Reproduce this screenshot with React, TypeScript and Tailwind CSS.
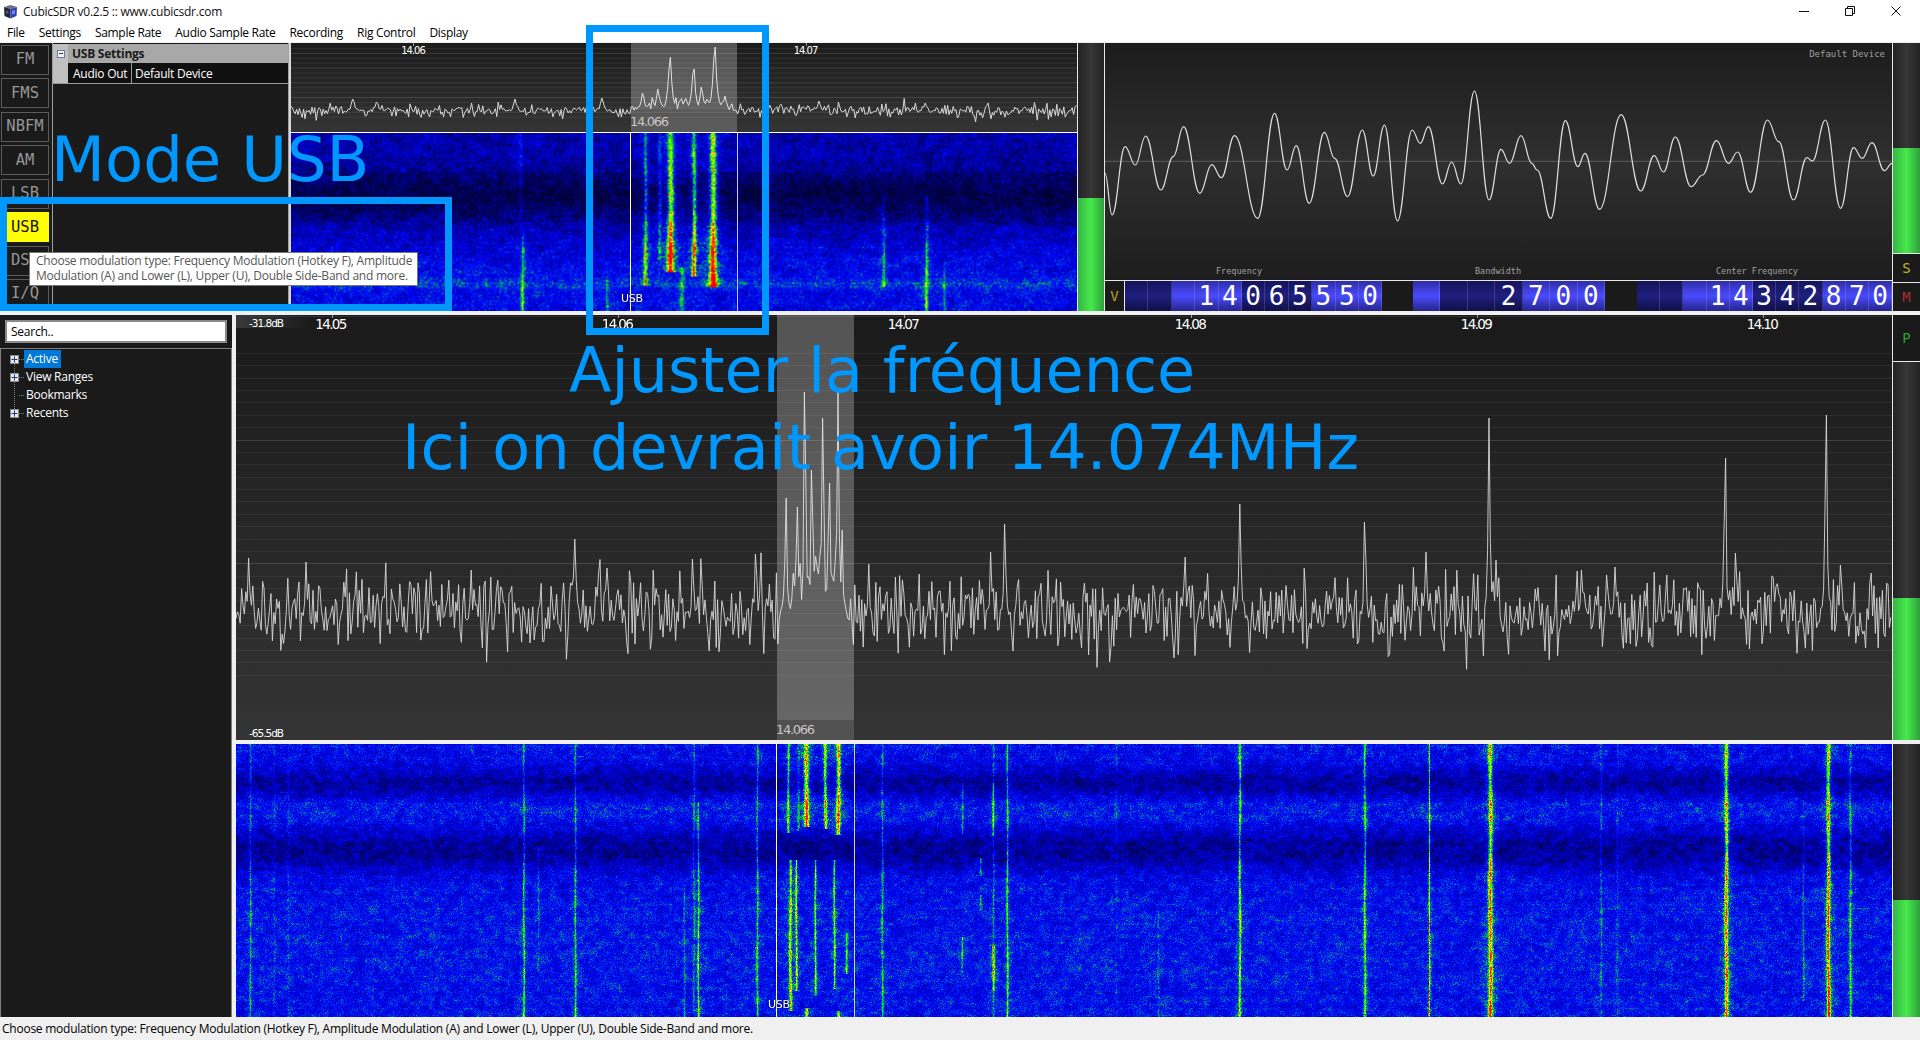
import React, { useLayoutEffect, useRef } from "react";

const rng = (seed: number) => () => {
  seed |= 0;
  seed = (seed + 0x6d2b79f5) | 0;
  let t = Math.imul(seed ^ (seed >>> 15), 1 | seed);
  t = (t + Math.imul(t ^ (t >>> 7), 61 | t)) ^ t;
  return ((t ^ (t >>> 14)) >>> 0) / 4294967296;
};
const bump = (y: number, c: number, h: number) => Math.exp(-(((y - c) / h) ** 2));

const stops: [number, number, number, number][] = [
  [0, 0, 0, 0],
  [0.22, 0, 0, 70],
  [0.36, 0, 0, 190],
  [0.45, 0, 5, 250],
  [0.51, 0, 50, 235],
  [0.57, 0, 135, 130],
  [0.63, 0, 205, 50],
  [0.72, 40, 255, 0],
  [0.82, 255, 255, 0],
  [0.93, 255, 50, 0],
  [1, 255, 0, 0],
];
const color = (v: number) => {
  const c = Math.min(1, Math.max(0, v));
  for (let i = 1; i < stops.length; i++) {
    if (c <= stops[i][0]) {
      const a = stops[i - 1];
      const b = stops[i];
      const t = (c - a[0]) / (b[0] - a[0]);
      return [a[1] + (b[1] - a[1]) * t, a[2] + (b[2] - a[2]) * t, a[3] + (b[3] - a[3]) * t];
    }
  }
  return [255, 0, 0];
};

type Sig = [number, number, number, number, number, number];

function Waterfall(props: {
  width: number;
  height: number;
  scale: number;
  ox: number;
  oy: number;
  lines: Sig[];
  level: (y: number) => number;
  noise: number;
  low: number;
  seed: number;
}) {
  const { width, height, scale, ox, oy, lines, level, noise, low: lowAmp, seed } = props;
  const ref = useRef<HTMLCanvasElement>(null);
  const w = Math.round(width / scale);
  const h = Math.round(height / scale);
  useLayoutEffect(() => {
    const ctx = ref.current!.getContext("2d")!;
    const img = ctx.createImageData(w, h);
    const r = rng(seed);
    const gw = Math.ceil(w / 5) + 2;
    const gh = Math.ceil(h / 4) + 2;
    const coarse = new Float32Array(gw * gh).map(() => r() - 0.5);
    const rowJit = new Float32Array(h).map(() => r() - 0.5);
    const rowMod = new Float32Array(h);
    let m = 1;
    for (let y = 0; y < h; y++) {
      m += (1 - m) * 0.12 + (r() - 0.5) * 0.16;
      rowMod[y] = m;
    }
    const phases = lines.map(() => r() * 6.28);
    for (let y = 0; y < h; y++) {
      const py = y * scale;
      const ay = oy + py;
      const base = level(py);
      for (let x = 0; x < w; x++) {
        const ax = ox + x * scale;
        const gx = x / 5;
        const gy = y / 4;
        const ix = Math.floor(gx);
        const iy = Math.floor(gy);
        const fx = gx - ix;
        const fy = gy - iy;
        const c00 = coarse[iy * gw + ix];
        const c10 = coarse[iy * gw + ix + 1];
        const c01 = coarse[(iy + 1) * gw + ix];
        const c11 = coarse[(iy + 1) * gw + ix + 1];
        const low = c00 * (1 - fx) * (1 - fy) + c10 * fx * (1 - fy) + c01 * (1 - fx) * fy + c11 * fx * fy;
        let v = base + (r() + r() - 1) * noise + low * lowAmp + rowJit[y] * 0.025;
        for (let i = 0; i < lines.length; i++) {
          const l = lines[i];
          if (ay < l[4] || ay > l[5]) continue;
          const wob = Math.sin(ay * 0.045 + phases[i]) * 0.3;
          const d = ax - l[0] - wob;
          const ad = Math.abs(d);
          if (ad > l[1] * 8 + 3) continue;
          const t = (ay - l[4]) / Math.max(1, l[5] - l[4]);
          const a = (l[2] + (l[3] - l[2]) * t) * rowMod[y];
          v += a * Math.exp(-((d / l[1]) ** 2)) + a * 0.4 * r() * Math.exp(-((d / (l[1] * 3 + 1)) ** 2));
        }
        const col = color(v);
        const o = (y * w + x) * 4;
        img.data[o] = col[0];
        img.data[o + 1] = col[1];
        img.data[o + 2] = col[2];
        img.data[o + 3] = 255;
      }
    }
    ctx.putImageData(img, 0, 0);
  }, []);
  return <canvas ref={ref} width={w} height={h} className="block h-full w-full" />;
}

const topLines: Sig[] = [
  [645, 1.7, 0.2, 0.34, 133, 285],
  [670, 3.2, 0.33, 0.54, 133, 272],
  [693.5, 2, 0.3, 0.46, 133, 276],
  [712.6, 3.2, 0.36, 0.54, 133, 287],
  [520, 1.4, 0.1, 0.08, 133, 230],
  [522, 1.5, 0.12, 0.26, 230, 311],
  [659, 1.6, 0.12, 0.18, 133, 260],
  [883, 1.4, 0.1, 0.2, 196, 286],
  [926, 1.5, 0.14, 0.28, 196, 311],
  [944, 1.2, 0.1, 0.16, 262, 311],
  [606, 1.2, 0.1, 0.18, 280, 311],
  [681, 1.8, 0.12, 0.18, 268, 311],
];

const mainLines: Sig[] = [
  [250, 0.9, 0.09, 0.15, 744, 1017],
  [274, 0.9, 0.05, 0.05, 744, 1017],
  [288, 0.9, 0.045, 0.045, 744, 1017],
  [523.5, 1, 0.14, 0.22, 744, 1017],
  [538, 0.9, 0.08, 0.09, 846, 970],
  [575, 1, 0.13, 0.2, 744, 1017],
  [684, 0.9, 0.08, 0.12, 884, 1017],
  [693.5, 1, 0.11, 0.1, 744, 1010],
  [698, 0.9, 0.17, 0.25, 802, 1017],
  [757, 1, 0.15, 0.19, 744, 1017],
  [788, 1.2, 0.23, 0.28, 744, 832],
  [806, 2.2, 0.36, 0.44, 744, 826],
  [825, 1.5, 0.32, 0.34, 744, 828],
  [838, 2, 0.36, 0.42, 744, 834],
  [798, 1.2, 0.07, 0.14, 744, 830],
  [790, 1.3, 0.26, 0.36, 860, 1010],
  [796, 0.9, 0.28, 0.3, 860, 990],
  [815, 0.9, 0.24, 0.26, 860, 995],
  [834, 0.9, 0.26, 0.28, 860, 988],
  [846, 0.9, 0.24, 0.22, 933, 973],
  [806, 1.4, 0.3, 0.3, 1008, 1017],
  [838, 1.4, 0.26, 0.26, 1011, 1017],
  [882, 1, 0.11, 0.18, 744, 1017],
  [962, 0.9, 0.16, 0.14, 783, 833],
  [962, 0.9, 0.22, 0.14, 937, 972],
  [980, 1.1, 0.17, 0.12, 858, 875],
  [980, 0.9, 0.17, 0.12, 895, 910],
  [993, 1, 0.11, 0.11, 744, 1017],
  [993, 1.1, 0.15, 0.13, 783, 835],
  [993, 1.1, 0.25, 0.22, 945, 990],
  [1007, 1, 0.19, 0.23, 744, 1017],
  [1116, 0.9, 0.05, 0.05, 744, 1017],
  [1158, 0.8, 0.06, 0.08, 900, 1017],
  [1239.5, 1.1, 0.25, 0.28, 744, 1017],
  [1364.5, 1.1, 0.22, 0.24, 744, 1017],
  [1429, 0.6, 0.28, 0.36, 744, 1017],
  [1490, 2, 0.34, 0.41, 744, 1017],
  [1600.7, 1, 0.08, 0.09, 744, 1017],
  [1617, 0.9, 0.06, 0.06, 744, 1017],
  [1726, 1.8, 0.33, 0.4, 744, 1017],
  [1828, 1.8, 0.33, 0.44, 744, 1017],
  [1850, 1.2, 0.12, 0.22, 744, 1017],
  [1803, 1, 0.06, 0.12, 800, 1000],
];

const mainLevel = (y: number) =>
  0.445 - 0.125 * bump(y, 38, 15) - 0.135 * bump(y, 105, 22) + 0.03 * bump(y, 68, 14) + 0.012 * bump(y, 210, 40);
const topLevel = (y: number) =>
  0.345 - 0.13 * bump(y, 62, 24) + 0.085 * Math.min(1, Math.max(0, (y - 85) / 50)) + 0.07 * bump(y, 151, 6);

type Peak = [number, number];
const mainPeaks: Peak[] = [
  [13, 558], [70, 562], [235, 570], [338.4, 539], [370.5, 568], [457, 559], [520, 554],
  [550, 498], [561, 507], [569, 392], [576, 470], [587, 418], [593, 483], [602, 392], [606, 530],
  [755, 552], [769, 524], [949, 557], [1004, 504], [1129, 522], [1190, 552], [1253, 418], [1260, 560],
  [1346, 570], [1379, 567], [1489, 458], [1590, 415], [1500, 553], [1605, 565],
];
const topPeaks: Peak[] = [
  [62, 99], [86, 102], [224, 99], [311, 98], [352, 93], [367, 89], [379, 57], [402.5, 69], [410.6, 87],
  [423.7, 47], [434, 96], [528, 101], [634, 103],
];

function trace(width: number, step: number, center: number, amp: number, peaks: Peak[], seed: number, lift: (x: number) => number, pw: number) {
  const r = rng(seed);
  const out: string[] = [];
  for (let x = 0; x <= width; x += step) {
    const n = (r() + r() + r() - 1.5) * amp * 1.5;
    let y = center + n - lift(x);
    if (r() < 0.07) y += (r() < 0.6 ? 1 : -1) * amp * 0.9;
    for (const p of peaks) {
      const d = Math.abs(x - p[0]);
      if (d < step / 2) {
        y = p[1];
      } else if (d < pw * 5) {
        const k = 1 / (1 + (d / pw) ** 2);
        const py = p[1] + (center - p[1]) * (1 - k);
        y = Math.min(y, py + (r() * amp) / 2);
      }
    }
    out.push(`${x.toFixed(1)},${y.toFixed(1)}`);
  }
  return out.join(" ");
}

const mainTrace = trace(1656, 1.4, 613, 25, mainPeaks, 11, (x) => 34 * Math.exp(-(((x - 577) / 26) ** 4)) + 8 * bump(x, 1253, 14), 1.1);
const topTrace = trace(786, 1.4, 111, 4.5, topPeaks, 23, (x) => 9 * Math.exp(-(((x - 395) / 42) ** 4)), 2);

const scopePts: [number, number][] = [
  [64, 520], [77, 645], [101, 440], [120, 495], [139, 408], [167, 570], [190, 470], [209, 380], [239, 580], [261, 494],
  [279, 533], [303, 407], [346, 655], [377, 340], [400, 510], [417, 437], [441, 610], [469, 397], [488, 475], [512, 590],
  [539, 390], [559, 528], [580, 375], [604, 663], [631, 390], [646, 430], [661, 380], [687, 552], [704, 486], [721, 552],
  [746, 273], [773, 600], [795, 448], [811, 490], [832, 407], [852, 490], [862, 510], [887, 655], [914, 362], [937, 500],
  [950, 460], [977, 628], [1017, 344], [1053, 573], [1078, 467], [1095, 516], [1117, 411], [1146, 560], [1167, 525], [1193, 422],
  [1215, 490], [1232, 456], [1256, 577], [1287, 360], [1308, 425], [1335, 600], [1360, 473], [1370, 483], [1394, 360], [1422, 625],
  [1446, 443], [1462, 475], [1480, 428], [1503, 512], [1517, 490],
];
const scopePath = scopePts
  .map((p, i) => {
    if (i === 0) return `M${p[0]} ${p[1]}`;
    const a = scopePts[i - 1];
    const dx = (p[0] - a[0]) * 0.42;
    return `C${a[0] + dx} ${a[1]} ${p[0] - dx} ${p[1]} ${p[0]} ${p[1]}`;
  })
  .join(" ");

const uiFont = "font-['Open_Sans',sans-serif]";
const glFont = "font-['DejaVu_Sans',sans-serif]";
const monoFont = "font-['DejaVu_Sans_Mono',monospace]";

function CubeIcon() {
  return (
    <svg width="15" height="15" viewBox="0 0 15 15">
      <path d="M1 3 L7.5 1 L14 3 L7.5 5 Z" fill="#6b6f80" />
      <path d="M1 3 L7.5 5 L7.5 14.5 L1.5 12 Z" fill="#23243a" />
      <path d="M14 3 L7.5 5 L7.5 14.5 L13.5 12 Z" fill="#2b3fb8" />
      <path d="M9 7 L12 6 L12 9.5 L9 10.5 Z" fill="#7b8cf0" />
      <path d="M3 6.5 L5.5 7.3 L5.5 10 L3 9.2 Z" fill="#55586e" />
    </svg>
  );
}

function TitleBar() {
  return (
    <div className="flex h-[22px] shrink-0 items-center justify-between bg-white">
      <div className={`flex items-center gap-[5px] pl-[3px] text-[12px] tracking-[-0.25px] text-[#111] ${uiFont}`}>
        <CubeIcon />
        <span className="pt-[1px]">CubicSDR v0.2.5 :: www.cubicsdr.com</span>
      </div>
      <div className="flex pr-[1px]">
        <div className="flex h-[21px] w-[46px] items-center justify-center">
          <svg width="10" height="10" viewBox="0 0 10 10"><path d="M0 5.5H10" stroke="#111" /></svg>
        </div>
        <div className="flex h-[21px] w-[46px] items-center justify-center">
          <svg width="10" height="10" viewBox="0 0 10 10" fill="none" stroke="#111"><path d="M.5 2.5H7.5V9.5H.5Z" /><path d="M2.5 2.5V.5H9.5V7.5H7.5" /></svg>
        </div>
        <div className="flex h-[21px] w-[46px] items-center justify-center">
          <svg width="10" height="10" viewBox="0 0 10 10" stroke="#111"><path d="M.5.5L9.5 9.5M9.5.5L.5 9.5" /></svg>
        </div>
      </div>
    </div>
  );
}

function MenuBar() {
  const items = ["File", "Settings", "Sample Rate", "Audio Sample Rate", "Recording", "Rig Control", "Display"];
  return (
    <div className={`flex h-[21px] shrink-0 items-center gap-[14px] border-b border-[#f0f0f0] bg-white pl-[7px] pt-[1px] text-[12px] tracking-[-0.3px] text-black ${uiFont}`}>
      {items.map((m) => (
        <span key={m}>{m}</span>
      ))}
    </div>
  );
}

function ModeColumn() {
  const modes = ["FM", "FMS", "NBFM", "AM", "LSB", "USB", "DSB", "I/Q"];
  return (
    <div className="flex w-[52px] shrink-0 flex-col gap-[3.5px] bg-[#1a1a1a] py-[2px] pl-[1px] pr-[3px]">
      {modes.map((m) => (
        <div
          key={m}
          className={`flex flex-1 items-center justify-center border text-[15.5px] ${monoFont} ${
            m === "USB" ? "border-[#ffff00] bg-[#ffff00] text-[#111]" : "border-[#5c5c5c] bg-[#1a1a1a] text-[#969696]"
          }`}
        >
          {m}
        </div>
      ))}
    </div>
  );
}

function SettingsPanel() {
  return (
    <div className={`flex w-[237px] shrink-0 flex-col border-x border-[#a0a0a0] bg-[#1a1a1a] text-[12px] tracking-[-0.25px] ${uiFont}`}>
      <div className="flex h-[41px] flex-col border-b border-[#9a9a9a] pt-[1px]">
        <div className="flex h-[20px] items-center bg-[#a8a8a8]">
          <div className="flex w-[15px] items-center justify-center self-stretch bg-[#c0c0c0]">
            <div className="flex h-[8px] w-[8px] items-center justify-center border border-[#6f7a96] bg-[#f4f4f4]">
              <div className="h-[1px] w-[4px] bg-[#27357a]" />
            </div>
          </div>
          <span className="pl-[4px] pt-[1px] font-bold text-[#1a1a1a]">USB Settings</span>
        </div>
        <div className="flex h-[20px] items-center bg-[#101010] text-white">
          <div className="w-[15px] self-stretch bg-[#c0c0c0]" />
          <div className="flex h-full w-[64px] items-center border-r border-[#9a9a9a] pl-[5px] pt-[2px]">Audio Out</div>
          <div className="pl-[3px] pt-[2px]">Default Device</div>
        </div>
      </div>
    </div>
  );
}

function Meter({ green }: { green: string }) {
  return (
    <div className="flex min-h-0 flex-1 flex-col">
      <div className="min-h-0 flex-1 bg-linear-to-r from-[#232323] via-[#363636] to-[#232323]" />
      <div className={`shrink-0 bg-linear-to-r from-[#35b545] via-[#47ea4b] to-[#2f9f3c] ${green}`} />
    </div>
  );
}

function TopSpectrum() {
  const ticks: [string, number][] = [["14.06", 122], ["14.07", 514.5]];
  return (
    <div className="relative h-[89px] shrink-0 overflow-hidden bg-linear-to-b from-[#1c1c1c] to-[#343434]">
      <svg width="786" height="89" viewBox="0 43 786 89" className="block">
        {Array.from({ length: 15 }, (_, i) => (
          <line key={i} x1="0" x2="786" y1={48.5 + i * 4.9} y2={48.5 + i * 4.9} stroke="#fff" strokeOpacity={i % 3 === 1 ? 0.13 : 0.07} />
        ))}
        <polyline points={topTrace} fill="none" stroke="#d8d8d8" strokeWidth="1" />
      </svg>
      <div className="absolute bottom-[22px] left-[340px] top-0 w-[106px] bg-white/25" />
      <div className="absolute bottom-0 left-[340px] h-[22px] w-[106px] bg-white/20" />
      {ticks.map(([t, x]) => (
        <React.Fragment key={t}>
          <div className="absolute top-0 h-[3px] w-[1px] bg-[#999]" style={{ left: x }} />
          <div className={`absolute top-[3px] -translate-x-1/2 text-[10px] leading-[10px] tracking-[-1px] text-white ${glFont}`} style={{ left: x }}>
            {t}
          </div>
        </React.Fragment>
      ))}
      <div className={`absolute left-[339px] top-[71px] text-[13px] leading-[16px] tracking-[-1.3px] text-[#c8c8c8] ${glFont}`}>14.066</div>
    </div>
  );
}

function MainSpectrum() {
  const ticks: [string, number][] = [
    ["14.05", 95.5], ["14.06", 382], ["14.07", 668], ["14.08", 955], ["14.09", 1241], ["14.10", 1527],
  ];
  return (
    <div className="relative min-h-0 flex-1 overflow-hidden bg-linear-to-b from-[#1a1a1a] to-[#343434]">
      <svg width="1656" height="425" viewBox="0 315 1656 425" className="block">
        <line x1="0" x2="1656" y1="316.5" y2="316.5" stroke="#fff" strokeOpacity="0.1" />
        {Array.from({ length: 27 }, (_, i) => (
          <line key={i} x1="0" x2="1656" y1={353.5 + Math.round(i * 12.37)} y2={353.5 + Math.round(i * 12.37)} stroke="#fff" strokeOpacity={i % 10 === 7 ? 0.14 : 0.06} />
        ))}
        <polyline points={mainTrace} fill="none" stroke="#d8d8d8" strokeWidth="0.9" />
      </svg>
      <div className="absolute left-[541px] top-0 h-[405px] w-[77px] bg-white/25" />
      <div className="absolute bottom-0 left-[541px] h-[20px] w-[77px] bg-white/15" />
      <div className="absolute left-0 top-0 h-[13px] w-[75px] bg-linear-to-r from-[#3a3a3a] to-transparent" />
      <div className={`absolute left-[13px] top-[2px] text-[10.5px] leading-[12px] tracking-[-1px] text-white ${glFont}`}>-31.8dB</div>
      <div className={`absolute bottom-[1px] left-[13px] text-[10.5px] leading-[12px] tracking-[-1px] text-white ${glFont}`}>-65.5dB</div>
      {ticks.map(([t, x]) => (
        <React.Fragment key={t}>
          <div className="absolute top-0 h-[3px] w-[1px] bg-[#999]" style={{ left: x }} />
          <div className={`absolute top-[2px] -translate-x-1/2 text-[13.5px] leading-[14px] tracking-[-1.6px] text-white ${glFont}`} style={{ left: x - 1 }}>
            {t}
          </div>
        </React.Fragment>
      ))}
      <div className={`absolute left-[540px] top-[407px] text-[13px] leading-[16px] tracking-[-1.3px] text-[#c8c8c8] ${glFont}`}>14.066</div>
    </div>
  );
}

function Cell({ kind, digit, cls }: { kind: "d" | "b"; digit?: string; cls: string }) {
  return (
    <div
      className={`flex h-full items-center justify-center border-r border-white/15 text-[26px] leading-none text-white ${monoFont} ${cls} ${
        kind === "d"
          ? "bg-linear-to-b from-[#14145c] via-[#1f1f80] to-[#101048]"
          : "bg-linear-to-b from-[#2e2ea6] via-[#4a4aff] to-[#25258c]"
      }`}
    >
      {digit}
    </div>
  );
}

function DigitStrip() {
  const freq: ["d" | "b", string][] = [["d", ""], ["d", ""], ["b", ""], ["b", "1"], ["b", "4"], ["d", "0"], ["d", "6"], ["d", "5"], ["b", "5"], ["b", "5"], ["b", "0"]];
  const bw: ["d" | "b", string][] = [["b", ""], ["d", ""], ["d", ""], ["d", "2"], ["b", "7"], ["b", "0"], ["b", "0"]];
  const center: ["d" | "b", string][] = [["d", ""], ["d", ""], ["b", ""], ["b", "1"], ["b", "4"], ["d", "3"], ["d", "4"], ["d", "2"], ["b", "8"], ["b", "7"], ["b", "0"]];
  return (
    <div className="flex h-[31px] shrink-0 border-t border-[#e8e8e8] bg-[#1a1a1a]">
      <div className={`flex w-[20px] shrink-0 items-center justify-center border-r border-[#e8e8e8] text-[14px] text-[#b5a820] ${monoFont}`}>V</div>
      <div className="flex h-full w-[257px] shrink-0">
        {freq.map((c, i) => (
          <Cell key={i} kind={c[0]} digit={c[1]} cls="w-[23.4px] shrink-0" />
        ))}
      </div>
      <div className="w-[31px] shrink-0" />
      <div className="flex h-full w-[192px] shrink-0">
        {bw.map((c, i) => (
          <Cell key={i} kind={c[0]} digit={c[1]} cls="w-[27.43px] shrink-0" />
        ))}
      </div>
      <div className="w-[32px] shrink-0" />
      <div className="flex h-full min-w-0 flex-1">
        {center.map((c, i) => (
          <Cell key={i} kind={c[0]} digit={c[1]} cls="flex-1" />
        ))}
      </div>
    </div>
  );
}

function Scope() {
  return (
    <div className="relative min-h-0 flex-1 bg-linear-to-b from-[#1c1c1c] via-[#2f2f2f] to-[#1d1d1d]">
      <svg viewBox="64 129 1453 711" preserveAspectRatio="none" className="block h-full w-full">
        <line x1="64" x2="1517" y1="484" y2="484" stroke="#5c5c5c" strokeWidth="1" vectorEffect="non-scaling-stroke" />
        <path d={scopePath} fill="none" stroke="#dedede" strokeWidth="1.2" vectorEffect="non-scaling-stroke" />
      </svg>
      <span className={`absolute right-[7px] top-[5px] text-[9px] leading-[12px] text-[#a0a0a0] ${monoFont}`}>Default Device</span>
      <span className={`absolute bottom-[3px] left-[111px] text-[8.5px] leading-[12px] text-[#a0a0a0] ${monoFont}`}>Frequency</span>
      <span className={`absolute bottom-[3px] left-[370px] text-[8.5px] leading-[12px] text-[#a0a0a0] ${monoFont}`}>Bandwidth</span>
      <span className={`absolute bottom-[3px] left-[611px] text-[8.5px] leading-[12px] text-[#a0a0a0] ${monoFont}`}>Center Frequency</span>
    </div>
  );
}

function SideButton({ label, cls, h }: { label: string; cls: string; h: string }) {
  return <div className={`flex shrink-0 items-center justify-center border-t border-[#e8e8e8] bg-[#1a1a1a] text-[14px] ${monoFont} ${cls} ${h}`}>{label}</div>;
}

function TopRow() {
  return (
    <div className="flex h-[268px] shrink-0">
      <ModeColumn />
      <SettingsPanel />
      <div className="w-[2px] shrink-0 bg-[#d8d8d8]" />
      <div className="flex w-[786px] shrink-0 flex-col">
        <TopSpectrum />
        <div className="relative min-h-0 flex-1 border-t border-white">
          <Waterfall width={786} height={178} scale={1.5} ox={291} oy={133} lines={topLines} level={topLevel} noise={0.12} low={0.09} seed={5} />
          <div className="absolute bottom-0 left-[339px] top-0 w-[1px] bg-white" />
          <div className="absolute bottom-0 left-[446px] top-0 w-[1px] bg-[#c9c9ff]" />
          <div className={`absolute left-[330px] top-[159px] text-[11px] leading-[13px] tracking-[-0.3px] text-white [text-shadow:0_0_2px_#000] ${glFont}`}>USB</div>
        </div>
      </div>
      <div className="flex w-[28px] shrink-0 border-x border-[#e8e8e8]">
        <Meter green="h-[113px]" />
      </div>
      <div className="flex min-w-0 flex-1 flex-col">
        <Scope />
        <DigitStrip />
      </div>
      <div className="flex w-[28px] shrink-0 flex-col border-l border-[#e8e8e8]">
        <Meter green="h-[105px]" />
        <SideButton label="S" cls="text-[#c4b820]" h="h-[29px]" />
        <SideButton label="M" cls="text-[#a83030]" h="h-[29px]" />
      </div>
    </div>
  );
}

function PlusBox({ visible }: { visible: boolean }) {
  return visible ? (
    <div className="relative z-10 flex h-[9px] w-[9px] shrink-0 items-center justify-center border border-[#8a8a8a] bg-[#e8e8e8]">
      <svg width="7" height="7" viewBox="0 0 7 7"><path d="M.5 3.5H6.5M3.5.5V6.5" stroke="#27357a" /></svg>
    </div>
  ) : (
    <div className="h-[9px] w-[9px] shrink-0" />
  );
}

function TreePanel() {
  const rows: [string, boolean][] = [["Active", true], ["View Ranges", true], ["Bookmarks", false], ["Recents", true]];
  return (
    <div className={`flex w-[232px] shrink-0 flex-col bg-[#1a1a1a] text-[12px] tracking-[-0.25px] ${uiFont}`}>
      <div className="h-[33px] shrink-0 px-[5px] pt-[5px]">
        <div className="flex h-[23px] items-center border-2 border-[#8a8a8a] bg-white pl-[4px] text-black">Search..</div>
      </div>
      <div className="relative min-h-0 flex-1 border-x border-t border-[#808080] pl-[9px] pt-[1px]">
        <div className="absolute left-[13px] top-[10px] h-[54px] border-l border-dotted border-[#808080]" />
        {rows.map(([t, box], i) => (
          <div key={t} className="relative flex h-[18px] items-center">
            <PlusBox visible={box} />
            <div className="w-[5px] shrink-0 border-t border-dotted border-[#808080]" />
            <div className={`flex h-[18px] items-center pl-[2px] pr-[3px] text-white ${i === 0 ? "bg-[#0078d7]" : ""}`}>{t}</div>
          </div>
        ))}
      </div>
    </div>
  );
}

function BottomRow() {
  return (
    <div className="flex min-h-0 flex-1">
      <TreePanel />
      <div className="w-[4px] shrink-0 bg-[#f0f0f0]" />
      <div className="flex min-w-0 flex-1 flex-col gap-[4px]">
        <div className="flex h-[425px] shrink-0">
          <MainSpectrum />
          <div className="flex w-[28px] shrink-0 flex-col border-l border-[#e8e8e8]">
            <div className={`flex h-[47px] shrink-0 items-center justify-center border-b border-[#e8e8e8] bg-[#1a1a1a] text-[14px] text-[#2fa02f] ${monoFont}`}>P</div>
            <Meter green="h-[142px]" />
          </div>
        </div>
        <div className="flex min-h-0 flex-1">
          <div className="relative w-[1656px] shrink-0">
            <Waterfall width={1656} height={273} scale={1} ox={236} oy={744} lines={mainLines} level={mainLevel} noise={0.11} low={0.12} seed={9} />
            <div className="absolute bottom-0 left-[540px] top-0 w-[1px] bg-white" />
            <div className="absolute bottom-0 left-[618px] top-0 w-[1px] bg-[#d0d0ff]" />
            <div className={`absolute left-[532px] top-[254px] text-[11px] leading-[13px] tracking-[-0.3px] text-white [text-shadow:0_0_2px_#000] ${glFont}`}>USB</div>
          </div>
          <div className="flex min-w-0 flex-1 border-l border-[#e8e8e8]">
            <Meter green="h-[117px]" />
          </div>
        </div>
      </div>
    </div>
  );
}

export default function App() {
  return (
    <div className="relative flex h-[1040px] w-[1920px] flex-col overflow-hidden bg-[#f0f0f0]">
      <TitleBar />
      <MenuBar />
      <TopRow />
      <div className="h-[4px] shrink-0 bg-[#f0f0f0]" />
      <BottomRow />
      <div className={`flex h-[23px] shrink-0 items-center bg-[#f0f0f0] pl-[2px] text-[12px] tracking-[-0.24px] text-black ${uiFont}`}>
        Choose modulation type: Frequency Modulation (Hotkey F), Amplitude Modulation (A) and Lower (L), Upper (U), Double Side-Band and more.
      </div>

      <div className="absolute left-0 top-[197px] h-[114px] w-[452px] border-[7px] border-[#0098ff]" />
      <div className="absolute left-[586px] top-[25px] h-[310px] w-[183px] border-[7px] border-[#0098ff]" />
      <div className={`absolute left-[51px] top-[129px] text-[62.5px] leading-[62px] text-[#0098ff] ${glFont}`}>Mode USB</div>
      <div className={`absolute left-[569px] top-[340px] text-[62px] leading-[62px] text-[#0098ff] ${glFont}`}>Ajuster la fréquence</div>
      <div className={`absolute left-[402px] top-[416.5px] text-[62px] leading-[62px] tracking-[0.25px] text-[#0098ff] ${glFont}`}>Ici on devrait avoir 14.074MHz</div>

      <div className={`absolute left-[29px] top-[252px] h-[34px] w-[389px] whitespace-nowrap border border-[#767676] bg-white pl-[6px] text-[12px] leading-[15px] tracking-[-0.24px] text-[#575757] ${uiFont}`}>
        Choose modulation type: Frequency Modulation (Hotkey F), Amplitude
        <br />
        Modulation (A) and Lower (L), Upper (U), Double Side-Band and more.
      </div>
    </div>
  );
}
